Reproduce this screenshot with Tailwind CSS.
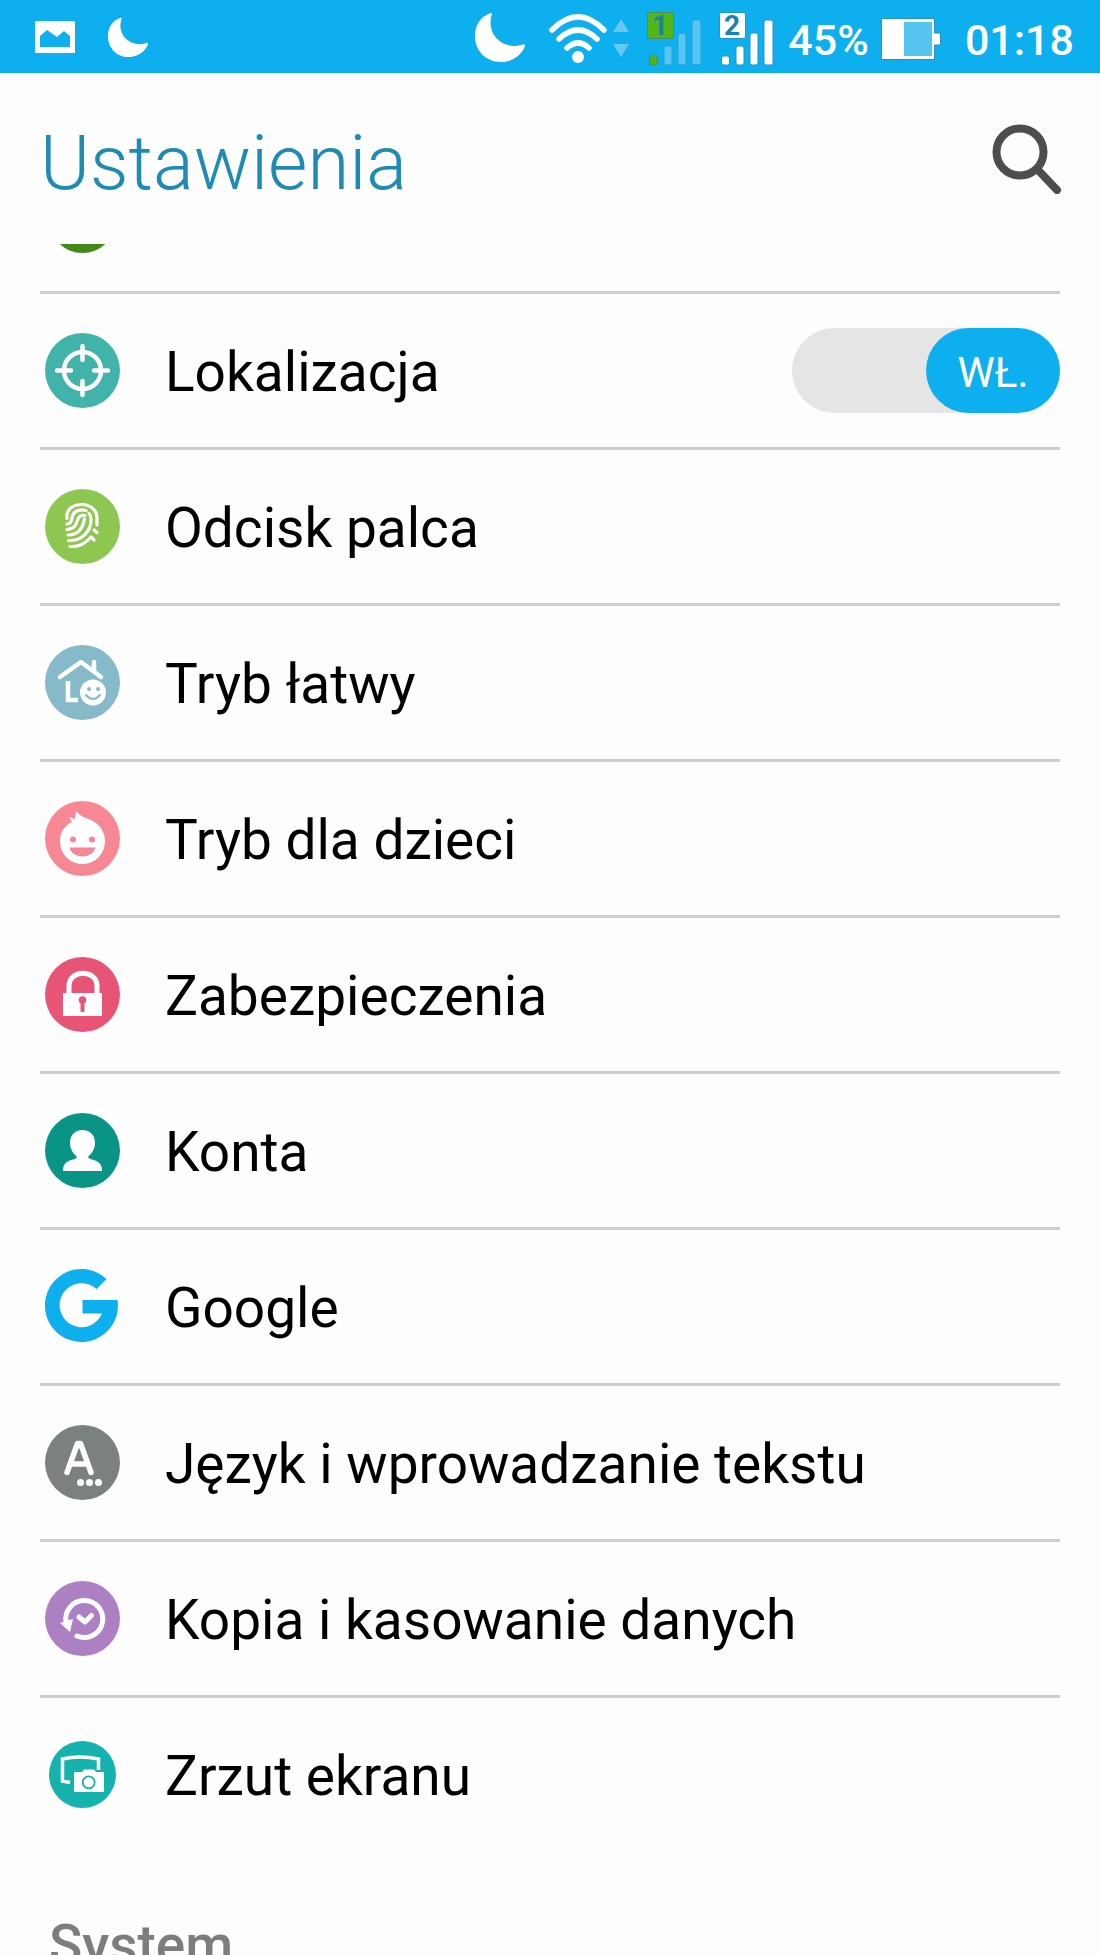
<!DOCTYPE html>
<html lang="pl">
<head>
  <meta charset="UTF-8">
  <meta name="viewport" content="width=device-width, initial-scale=1.0">
  <title>Ustawienia</title>
  <script src="https://cdn.jsdelivr.net/npm/@tailwindcss/browser@4"></script>
</head>
<body class="bg-[#fdfdfd] font-[Roboto,sans-serif] text-black">

  <div class="h-screen flex flex-col overflow-hidden">

    <!-- Status bar -->
    <div class="h-[73px] shrink-0 bg-[#0eafee] text-white flex items-center justify-between pl-[35px] pr-[26px]">
      <div class="flex items-center gap-[33px]">
        <svg class="w-10 h-8" viewBox="0 0 40 32" aria-hidden="true">
          <path fill="#fff" fill-rule="evenodd" d="M0 0H40V32H0ZM5 26H35V15L29 10L22 16L12 9L5 15Z"/>
        </svg>
        <svg class="w-10 h-10" viewBox="0 0 50 50" aria-hidden="true">
          <path fill="#fff" d="M16 1C5 4 0 14 0 24C0 39 11 50 26 50C37 50 47 43 50 34C50 32 48 32 46 33C29 38 10 23 17 2C17 1 17 1 16 1Z"/>
        </svg>
      </div>

      <div class="flex items-center">
        <svg class="w-[50px] h-[50px]" viewBox="0 0 50 50" aria-hidden="true">
          <path fill="#fff" d="M16 1C5 4 0 14 0 24C0 39 11 50 26 50C37 50 47 43 50 34C50 32 48 32 46 33C29 38 10 23 17 2C17 1 17 1 16 1Z"/>
        </svg>
        <!-- Wi-Fi with traffic arrows -->
        <svg class="ml-6 mt-1 w-20 h-[50px]" viewBox="0 0 80 50" aria-hidden="true">
          <g fill="none" stroke="#fff" stroke-width="5.5" stroke-linecap="round">
            <path d="M3 16Q29 -10 55 16"/>
            <path d="M10 25Q29 7 48 25"/>
            <path d="M18 34Q29 24 40 34"/>
          </g>
          <circle cx="29" cy="43" r="6" fill="#fff"/>
          <path fill="#67c9f3" d="M72 5L80 18H64ZM64 30H80L72 43Z"/>
        </svg>
        <!-- SIM 1 -->
        <svg class="ml-[18px] mt-1 w-[55px] h-[54px]" viewBox="0 0 55 54" aria-label="SIM 1">
          <rect x="0.5" y="0.5" width="26" height="26" rx="2" fill="#53b516" stroke="#4a8d55"/>
          <text x="13" y="23" text-anchor="middle" font-family="Roboto" font-size="28" font-weight="700" fill="#1783a5">1</text>
          <rect x="2.5" y="44" width="8" height="9" rx="2" fill="#53b516" stroke="#4a8d55"/>
          <g fill="#55c5f3" stroke="#2b9fd4">
            <rect x="17" y="34" width="8" height="19" rx="2"/>
            <rect x="31" y="21" width="8" height="32" rx="2"/>
            <rect x="45" y="8" width="9" height="45" rx="2"/>
          </g>
        </svg>
        <!-- SIM 2 -->
        <svg class="ml-[17px] mt-1 w-[55px] h-[54px]" viewBox="0 0 55 54" aria-label="SIM 2">
          <g fill="#fff" stroke="#2293c4">
            <rect x="0.5" y="0.5" width="26" height="26" rx="2"/>
            <rect x="2.5" y="44" width="8" height="9" rx="2"/>
            <rect x="17" y="34" width="8" height="19" rx="2"/>
            <rect x="31" y="21" width="8" height="32" rx="2"/>
            <rect x="45" y="8" width="9" height="45" rx="2"/>
          </g>
          <text x="13" y="23" text-anchor="middle" font-family="Roboto" font-size="28" font-weight="700" fill="#1783b5">2</text>
        </svg>
        <span class="ml-[14px] pt-2 text-[43px] leading-none font-medium">45%</span>
        <svg class="ml-3 mt-1 w-[60px] h-[42px]" viewBox="0 0 60 42" aria-hidden="true">
          <path fill="#fff" stroke="#2293c4" d="M.5 .5H53.500V15H59.500V27H53.500V41.500H.5Z"/>
          <rect x="23" y="4" width="28" height="34" fill="#55c5f0"/>
        </svg>
        <time class="ml-6 pt-2 text-[43px] leading-none font-medium">01:18</time>
      </div>
    </div>

    <!-- Header -->
    <header class="h-[171px] shrink-0 flex items-center justify-between pl-10 pr-[38px]">
      <h1 class="pt-2 text-[76px] leading-none font-light text-[#1e8bb5]">Ustawienia</h1>
      <button type="button" aria-label="Szukaj" class="w-[70px] h-[70px]">
        <svg class="w-full h-full" viewBox="0 0 70 70" fill="none" stroke="#4d4d4d" stroke-linecap="round">
          <circle cx="28" cy="28" r="23.500" stroke-width="8"/>
          <path d="M46 46L65 66" stroke-width="8"/>
        </svg>
      </button>
    </header>

    <!-- Settings list, scrolled part way down -->
    <main class="flex-1 min-h-0 overflow-hidden px-10">
      <div class="h-[47px] pl-[5px]">
        <svg class="w-[75px] h-[9px]" viewBox="0 62 75 9" aria-hidden="true"><circle cx="37.500" cy="37.500" r="33.500" fill="#418a17"/></svg>
      </div>

      <ul>
        <li class="h-[156px] border-t-3 border-[#cfcfcf] pl-[5px] flex items-center justify-between">
          <label for="location" class="flex items-center gap-[45px]">
            <svg class="w-[75px] h-[75px]" viewBox="0 0 75 75" aria-hidden="true">
              <circle cx="37.500" cy="37.500" r="37.500" fill="#42b3ab"/>
              <g fill="none" stroke="#fff" stroke-width="4.500" stroke-linecap="round">
                <circle cx="37.500" cy="37.500" r="18.500"/>
                <path d="M37.500 13V27M37.500 48V62M12 37.500H26M49 37.500H63"/>
              </g>
            </svg>
            <span class="pt-1 text-[55px] leading-none">Lokalizacja</span>
          </label>
          <label class="w-[268px] h-[85px] rounded-full bg-[#e5e5e5] flex justify-start has-checked:justify-end">
            <input id="location" type="checkbox" checked aria-label="Lokalizacja" class="sr-only">
            <span class="w-[134px] h-full rounded-full bg-[#0eafee] text-white text-[42px] leading-none pt-1 flex items-center justify-center">WŁ.</span>
          </label>
        </li>

        <li class="h-[156px] border-t-3 border-[#cfcfcf]">
          <a href="#odcisk" class="h-full pl-[5px] flex items-center gap-[45px]">
            <svg class="w-[75px] h-[75px]" viewBox="0 0 75 75" aria-hidden="true">
              <circle cx="37.500" cy="37.500" r="37.500" fill="#8dc751"/>
              <g fill="none" stroke="#fff" stroke-width="3.200" stroke-linecap="round" stroke-linejoin="round">
                <path d="M22 29.500C21 20 28 15.500 37 15.500C46 15.500 52 22 52 29V36"/>
                <path d="M22 35C29 34 25 28 29 24C32 21 37 20.500 41 21.500"/>
                <path d="M22 40.500C32 40 31 33 33.500 29C35 26.500 37 26 40 26.500"/>
                <path d="M23 46C34 46 38 38 39.500 30"/>
                <path d="M23.500 51.500C37 52 46 42 46 31C46 29 46 26 44 24.500"/>
                <path d="M25 57.500C34 58 41 54 46 48L49 51M49 41L52 43.500"/>
              </g>
            </svg>
            <span class="pt-1 text-[55px] leading-none">Odcisk palca</span>
          </a>
        </li>

        <li class="h-[156px] border-t-3 border-[#cfcfcf]">
          <a href="#latwy" class="h-full pl-[5px] flex items-center gap-[45px]">
            <svg class="w-[75px] h-[75px]" viewBox="0 0 75 75" aria-hidden="true">
              <circle cx="37.500" cy="37.500" r="37.500" fill="#86b9ca"/>
              <g fill="none" stroke="#fff" stroke-width="4.500" stroke-linecap="round" stroke-linejoin="round">
                <path d="M15 32L36 17L56 32M49 25V17"/>
                <path d="M23 36V55H33" stroke-linecap="butt" stroke-linejoin="miter"/>
              </g>
              <circle cx="48" cy="47.500" r="13" fill="#fff"/>
              <g fill="#86b9ca"><circle cx="44" cy="44" r="2"/><circle cx="53" cy="44" r="2"/></g>
              <path d="M41 50Q48 58 55 50" fill="none" stroke="#86b9ca" stroke-width="2" stroke-linecap="round"/>
            </svg>
            <span class="pt-1 text-[55px] leading-none">Tryb łatwy</span>
          </a>
        </li>

        <li class="h-[156px] border-t-3 border-[#cfcfcf]">
          <a href="#dzieci" class="h-full pl-[5px] flex items-center gap-[45px]">
            <svg class="w-[75px] h-[75px]" viewBox="0 0 75 75" aria-hidden="true">
              <circle cx="37.500" cy="37.500" r="37.500" fill="#f68793"/>
              <path fill="#fff" d="M31 10C36 16 41 17 46 19C55 23 60 31 60 40C60 53 50 63 37.500 63C25 63 15 53 15 40C15 31 20 24 27 21L24 16L30 18Z"/>
              <g fill="#f68793">
                <circle cx="28" cy="38.500" r="3"/>
                <circle cx="47" cy="38.500" r="3"/>
                <path d="M24.500 46.500H50.500C49 52 44 55.500 37.500 55.500C31 55.500 26 52 24.500 46.500Z"/>
              </g>
            </svg>
            <span class="pt-1 text-[55px] leading-none">Tryb dla dzieci</span>
          </a>
        </li>

        <li class="h-[156px] border-t-3 border-[#cfcfcf]">
          <a href="#zabezpieczenia" class="h-full pl-[5px] flex items-center gap-[45px]">
            <svg class="w-[75px] h-[75px]" viewBox="0 0 75 75" aria-hidden="true">
              <circle cx="37.500" cy="37.500" r="37.500" fill="#e85476"/>
              <path d="M24 38V29C24 12 52 12 52 29V38" fill="none" stroke="#fff" stroke-width="5"/>
              <rect x="18" y="36" width="39" height="23" fill="#fff"/>
              <circle cx="37.500" cy="43" r="3.800" fill="#e85476"/>
              <rect x="35.500" y="43" width="4" height="12" rx="1" fill="#e85476"/>
            </svg>
            <span class="pt-1 text-[55px] leading-none">Zabezpieczenia</span>
          </a>
        </li>

        <li class="h-[156px] border-t-3 border-[#cfcfcf]">
          <a href="#konta" class="h-full pl-[5px] flex items-center gap-[45px]">
            <svg class="w-[75px] h-[75px]" viewBox="0 0 75 75" aria-hidden="true">
              <circle cx="37.500" cy="37.500" r="37.500" fill="#0a9486"/>
              <path fill="#fff" d="M37.500 17C45 17 50 22 50 30C50 36 47 40 43 44C44 46 46 46 49 47C54 49 57 51 57 58H18C18 51 21 49 26 47C29 46 31 46 32 44C28 40 25 36 25 30C25 22 30 17 37.500 17Z"/>
            </svg>
            <span class="pt-1 text-[55px] leading-none">Konta</span>
          </a>
        </li>

        <li class="h-[156px] border-t-3 border-[#cfcfcf]">
          <a href="#google" class="h-full pl-[5px] flex items-center gap-[45px]">
            <svg class="w-[75px] h-[75px]" viewBox="0 0 75 75" aria-hidden="true">
              <path fill="#0eafee" d="M61.500 10A36.500 36.500 0 1 0 72.500 31H37.500V44.500H57A22 22 0 1 1 51.500 20Z"/>
            </svg>
            <span class="pt-1 text-[55px] leading-none">Google</span>
          </a>
        </li>

        <li class="h-[156px] border-t-3 border-[#cfcfcf]">
          <a href="#jezyk" class="h-full pl-[5px] flex items-center gap-[45px]">
            <svg class="w-[75px] h-[75px]" viewBox="0 0 75 75" aria-hidden="true">
              <circle cx="37.500" cy="37.500" r="37.500" fill="#7b817c"/>
              <g fill="none" stroke="#fff" stroke-width="5.500" stroke-linecap="round" stroke-linejoin="round">
                <path d="M22 47.500L32.500 18.500H35.500L46 47.500M26 39H42"/>
              </g>
              <g fill="#fff">
                <circle cx="35.500" cy="57.500" r="3.500"/>
                <circle cx="44.500" cy="57.500" r="3.500"/>
                <circle cx="53.500" cy="57.500" r="3.500"/>
              </g>
            </svg>
            <span class="pt-1 text-[55px] leading-none">Język i wprowadzanie tekstu</span>
          </a>
        </li>

        <li class="h-[156px] border-t-3 border-[#cfcfcf]">
          <a href="#kopia" class="h-full pl-[5px] flex items-center gap-[45px]">
            <svg class="w-[75px] h-[75px]" viewBox="0 0 75 75" aria-hidden="true">
              <circle cx="37.500" cy="37.500" r="37.500" fill="#ad7fc3"/>
              <g fill="none" stroke="#fff" stroke-width="5" stroke-linecap="round" stroke-linejoin="round">
                <path d="M21 41A18.500 18.500 0 1 1 32 55"/>
                <path d="M34 36L40 41L46.500 34.500"/>
              </g>
              <path fill="#fff" d="M15 42L28 38L25 51Z"/>
            </svg>
            <span class="pt-1 text-[55px] leading-none">Kopia i kasowanie danych</span>
          </a>
        </li>

        <li class="h-[156px] border-t-3 border-[#cfcfcf]">
          <a href="#zrzut" class="h-full pl-[5px] flex items-center gap-[45px]">
            <svg class="w-[75px] h-[75px]" viewBox="0 0 75 75" aria-hidden="true">
              <circle cx="37.500" cy="37.500" r="33.500" fill="#16b3ae"/>
              <path d="M25 45.500L17.500 44V22Q35 18 53.500 22V33" fill="none" stroke="#fff" stroke-width="3.500"/>
              <path fill="#fff" d="M30 35H37L39 32.500H49L51 35H58Q59 35 59 36V54Q59 55 58 55H30Q29 55 29 54V36Q29 35 30 35Z"/>
              <circle cx="43.700" cy="45.300" r="6" fill="none" stroke="#16b3ae" stroke-width="1.800"/>
            </svg>
            <span class="pt-1 text-[55px] leading-none">Zrzut ekranu</span>
          </a>
        </li>
      </ul>

      <h2 class="mt-[62px] pl-[9px] text-[55px] leading-[64px] font-medium text-[#7d7d7d]">System</h2>
    </main>
  </div>

</body>
</html>
